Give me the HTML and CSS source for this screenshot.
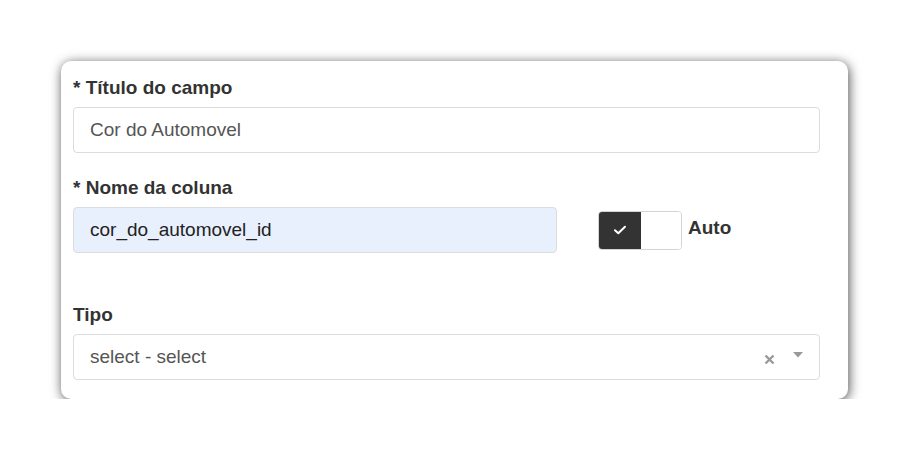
FILE: index.html
```html
<!DOCTYPE html>
<html lang="pt">
<head>
<meta charset="utf-8">
<link rel="stylesheet" href="styles.css">
</head>
<body>
<div class="card">
  <div class="field">
    <label class="label">* Título do campo</label>
    <div class="input">Cor do Automovel</div>
  </div>
  <div class="field field-2">
    <label class="label">* Nome da coluna</label>
    <div class="row">
      <div class="input input-auto">cor_do_automovel_id</div>
      <div class="toggle">
        <span class="toggle-on">
          <svg width="14" height="10" viewBox="0 0 14 10"><path d="M2 5.2 L5.3 8.3 L12 1.8" fill="none" stroke="#fff" stroke-width="2" stroke-linecap="round" stroke-linejoin="round"/></svg>
        </span>
        <span class="toggle-off"></span>
      </div>
      <span class="auto-label">Auto</span>
    </div>
  </div>
  <div class="field field-3">
    <label class="label">Tipo</label>
    <div class="input select">
      <span>select - select</span>
      <span class="select-icons">
        <svg class="clear" width="11" height="11" viewBox="0 0 11 11"><path d="M1.5 1.5 L9.5 9.5 M9.5 1.5 L1.5 9.5" stroke="#999" stroke-width="2.4"/></svg>
        <svg class="caret" width="10" height="6" viewBox="0 0 10 6"><path d="M0 0 H10 L5 5.5 Z" fill="#999"/></svg>
      </span>
    </div>
  </div>
</div>
</body>
</html>
```
FILE: styles.css
```css
* { box-sizing: border-box; }
html, body { margin: 0; padding: 0; background: #fff; }
body {
  font-family: "Liberation Sans", Arial, sans-serif;
  color: #333;
  padding: 61px 61px 0 61px;
}
.card {
  width: 787px;
  height: 338px;
  background: #fff;
  border-radius: 10px;
  box-shadow: 1px 2px 12px rgba(0,0,0,0.7);
  padding: 16px 28px 0 12px;
}
.field { display: flex; flex-direction: column; }
.label {
  display: block;
  font-weight: bold;
  font-size: 19px;
  line-height: 22px;
  color: #333;
  margin-bottom: 8px;
}
.field-2 { margin-top: 24px; }
.field-3 { margin-top: 51px; }
.input {
  height: 46px;
  border: 1px solid #dcdcdc;
  border-radius: 4px;
  background: #fff;
  padding: 0 16px;
  display: flex;
  align-items: center;
  font-size: 19px;
  color: #555;
}
.row { display: flex; align-items: center; }
.input-auto {
  width: 484px;
  background: #e8f0fe;
  color: #222;
}
.toggle {
  margin-left: 41px;
  width: 84px;
  height: 39px;
  border: 1px solid #d4d4d4;
  border-radius: 4px;
  display: flex;
  overflow: hidden;
}
.toggle-on {
  width: 42px;
  background: #333;
  display: flex;
  align-items: center;
  justify-content: center;
}
.toggle-off { flex: 1; background: #fff; }
.auto-label {
  margin-left: 6px;
  margin-top: -5px;
  font-weight: bold;
  font-size: 19px;
  color: #333;
}
.select { justify-content: space-between; padding-right: 16px; }
.select-icons { display: flex; align-items: center; gap: 18px; }
.clear { margin-top: 4px; }
.caret { margin-top: -4px; }
```
